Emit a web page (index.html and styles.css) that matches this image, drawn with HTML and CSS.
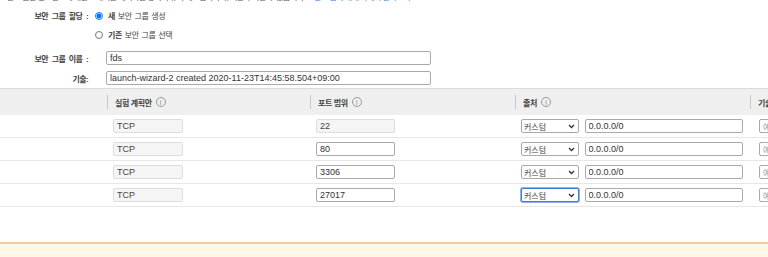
FILE: index.html
```html
<!DOCTYPE html>
<html lang="ko">
<head>
  <meta charset="UTF-8">
  <meta name="viewport" content="width=device-width, initial-scale=1.0">
  <title>보안 그룹 구성</title>
  <link rel="stylesheet" href="styles.css">
</head>
<body>
  <div class="intro">
    <p>보안 그룹은 인스턴스에 대한 트래픽을 제어하는 방화벽 규칙 세트입니다. 규칙을 추가할 수 있습니다. <a href="#">보안 그룹에 대해 자세히 알아보기.</a></p>
  </div>

  <div class="form">
    <span class="label">보안 그룹 할당 :</span>
    <label class="radio"><input type="radio" name="assign" checked><span><b>새</b> 보안 그룹 생성</span></label>

    <span class="label"></span>
    <label class="radio"><input type="radio" name="assign"><span><b>기존</b> 보안 그룹 선택</span></label>

    <span class="label push">보안 그룹 이름 :</span>
    <input class="text wide push" type="text" value="fds">

    <span class="label">기술:</span>
    <input class="text wide" type="text" value="launch-wizard-2 created 2020-11-23T14:45:58.504+09:00">
  </div>

  <div class="table-wrap">
    <table class="rules">
      <colgroup>
        <col style="width: 107px">
        <col style="width: 203px">
        <col style="width: 205px">
        <col style="width: 235px">
        <col style="width: 150px">
      </colgroup>
      <thead>
        <tr>
          <th></th>
          <th><div class="head">실험 계획안 <span class="info">i</span></div></th>
          <th><div class="head">포트 범위 <span class="info">i</span></div></th>
          <th><div class="head">출처 <span class="info">i</span></div></th>
          <th><div class="head">기술 <span class="info">i</span></div></th>
        </tr>
      </thead>
      <tbody id="rows"></tbody>
    </table>
  </div>

  <div class="spacer"></div>
  <div class="notice"></div>

  <script>
    // 인바운드 규칙 목록
    const rules = [
      { port: '22', locked: true },
      { port: '80' },
      { port: '3306' },
      { port: '27017', focus: true }
    ];

    const tbody = document.getElementById('rows');
    rules.forEach(rule => {
      const tr = document.createElement('tr');
      tr.innerHTML = `
        <td></td>
        <td><input class="text proto" type="text" value="TCP" disabled></td>
        <td><input class="text port" type="text" value="${rule.port}" ${rule.locked ? 'disabled' : ''}></td>
        <td>
          <select class="source${rule.focus ? ' focused' : ''}"><option>커스텀</option></select>
          <input class="text cidr" type="text" value="0.0.0.0/0">
        </td>
        <td class="last"><input class="text desc" type="text" placeholder="예: SSH"></td>`;
      tbody.appendChild(tr);
    });
  </script>
</body>
</html>
```

FILE: styles.css
```css
html, body {
  margin: 0;
  background: #fff;
  overflow: hidden;
}

body {
  width: 768px;
  height: 257px;
  font-family: "Liberation Sans", "Noto Sans CJK KR", sans-serif;
  font-size: 9px;
  color: #444;
}

.intro {
  height: 4px;
  overflow: hidden;
}

.intro p {
  margin: -8px 0 0;
  line-height: 12px;
  white-space: nowrap;
  font-size: 8px;
  letter-spacing: -0.5px;
  color: #555;
}

.intro a {
  color: #3a7fd3;
  text-decoration: none;
}

.form {
  display: grid;
  grid-template-columns: 88px 1fr;
  grid-template-rows: 19px 19px 24px 20px;
  column-gap: 6px;
  padding-top: 2px;
  align-items: center;
}

.form .push {
  margin-top: 4px;
}

.label {
  text-align: right;
  font-weight: bold;
  font-size: 8px;
  letter-spacing: -0.6px;
  word-spacing: 2px;
  color: #444;
}

.radio {
  display: flex;
  align-items: center;
  font-size: 8px;
  letter-spacing: -0.4px;
  word-spacing: 1px;
  color: #444;
}

.radio input {
  width: 8px;
  height: 8px;
  margin: 0 5px 0 1px;
}

.text {
  box-sizing: border-box;
  height: 14px;
  padding: 0 3px;
  border: 1px solid #a9a9a9;
  border-radius: 2px;
  font-family: "Liberation Sans", "Noto Sans CJK KR", sans-serif;
  font-size: 9px;
  color: #333;
  background: #fff;
  outline: none;
}

.text:disabled {
  background: #f5f5f5;
  border-color: #ddd;
  color: #444;
}

.form .wide {
  width: 325px;
  margin-left: 12px;
}

.table-wrap {
  width: 768px;
  overflow: hidden;
}

.rules {
  width: 900px;
  table-layout: fixed;
  border-collapse: collapse;
}

.rules thead th {
  height: 26px;
  padding: 0;
  background: #efefef;
  border-top: 1px solid #dcdcdc;
  text-align: left;
  font-weight: bold;
}

.head {
  display: flex;
  align-items: center;
  gap: 4px;
  height: 14px;
  padding-left: 7px;
  border-left: 1px solid #c8c8c8;
  font-size: 8px;
  letter-spacing: -0.4px;
  color: #444;
}

.info {
  display: inline-flex;
  justify-content: center;
  align-items: center;
  box-sizing: border-box;
  width: 10px;
  height: 10px;
  border: 1px solid #999;
  border-radius: 50%;
  font-size: 7px;
  font-weight: normal;
  letter-spacing: 0;
  color: #888;
}

.rules td {
  height: 22px;
  padding: 0 0 0 6px;
  border-bottom: 1px solid #e6e6e6;
  vertical-align: middle;
  white-space: nowrap;
}

.rules td.last {
  padding-left: 9px;
}

.proto {
  width: 70px;
}

.port {
  width: 79px;
}

.source {
  box-sizing: border-box;
  width: 58px;
  height: 14px;
  padding: 0 2px;
  border: 1px solid #a9a9a9;
  border-radius: 2px;
  background: #fff url("data:image/svg+xml,%3Csvg xmlns='http://www.w3.org/2000/svg' width='7' height='5' viewBox='0 0 7 5'%3E%3Cpath d='M1 1l2.5 2.5L6 1' fill='none' stroke='%23333' stroke-width='1.3'/%3E%3C/svg%3E") no-repeat right 3px center;
  appearance: none;
  font-family: "Noto Sans CJK KR", sans-serif;
  font-size: 8px;
  color: #444;
  vertical-align: middle;
}

.source.focused {
  border-color: #3b7dd8;
  box-shadow: 0 0 0 1px #8db4ea;
}

.cidr {
  width: 158px;
  margin-left: 3px;
  vertical-align: middle;
}

.desc {
  width: 120px;
  font-family: "Noto Sans CJK KR", sans-serif;
  font-size: 8px;
}

.desc::placeholder {
  color: #999;
}

.spacer {
  height: 35px;
}

.notice {
  height: 20px;
  border-top: 2px solid #f2caa2;
  background: #fff8e7;
}
```
